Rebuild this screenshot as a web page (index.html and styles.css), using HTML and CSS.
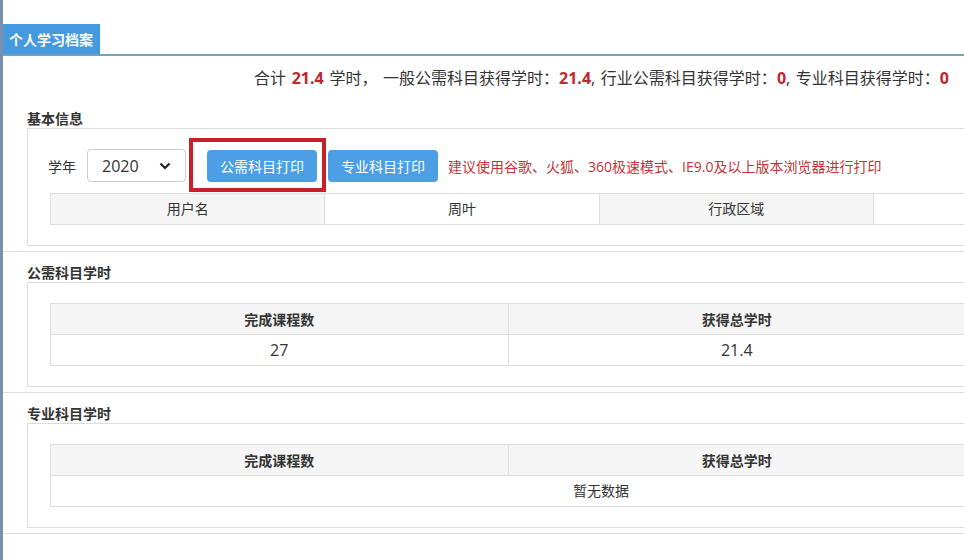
FILE: index.html
```html
<!DOCTYPE html>
<html>
<head>
    <meta charset="utf-8">
    <title>个人学习档案</title>
    <link rel="stylesheet" href="styles.css">
</head>
<body>
    <div class="page">
        <div class="tabbar">
            <span class="tab">个人学习档案</span>
        </div>

        <div class="summary">
            合计 <b>21.4</b> 学时， 一般公需科目获得学时：<b>21.4</b>, 行业公需科目获得学时：<b>0</b>, 专业科目获得学时：<b>0</b>
        </div>

        <div class="section">
            <div class="section-title">基本信息</div>
            <div class="box">
                <div class="toolbar">
                    <span class="label">学年</span>
                    <div class="select">
                        <span>2020</span>
                        <svg width="12" height="8" viewBox="0 0 12 8">
                            <polyline points="1.5,1.5 6,6 10.5,1.5" fill="none" stroke="#222" stroke-width="2.2"/>
                        </svg>
                    </div>
                    <span class="marked">
                        <button class="btn">公需科目打印</button>
                    </span>
                    <button class="btn">专业科目打印</button>
                    <span class="tip">建议使用谷歌、火狐、360极速模式、IE9.0及以上版本浏览器进行打印</span>
                </div>
                <table class="grid info">
                    <tr>
                        <td class="head">用户名</td>
                        <td>周叶</td>
                        <td class="head">行政区域</td>
                        <td></td>
                    </tr>
                </table>
            </div>
        </div>

        <div class="section">
            <div class="section-title">公需科目学时</div>
            <div class="box">
                <table class="grid">
                    <tr class="head">
                        <th>完成课程数</th>
                        <th>获得总学时</th>
                    </tr>
                    <tr>
                        <td class="num">27</td>
                        <td class="num">21.4</td>
                    </tr>
                </table>
            </div>
        </div>

        <div class="section">
            <div class="section-title">专业科目学时</div>
            <div class="box">
                <table class="grid">
                    <tr class="head">
                        <th>完成课程数</th>
                        <th>获得总学时</th>
                    </tr>
                    <tr>
                        <td colspan="2" class="empty">暂无数据</td>
                    </tr>
                </table>
            </div>
        </div>
    </div>
</body>
</html>
```

FILE: styles.css
```css
html, body {
    margin: 0;
    padding: 0;
    background: #fff;
    overflow: hidden;
}

body {
    font-family: "Open Sans", "Noto Sans CJK SC", sans-serif;
    color: #333;
    font-size: 14px;
}

.page {
    border-left: 3px solid #7d8fae;
    min-height: 560px;
    padding-top: 24px;
}

.tabbar {
    height: 30px;
    border-bottom: 2px solid #74a3b8;
}

.tab {
    display: inline-block;
    height: 30px;
    line-height: 30px;
    padding: 0 7px 0 6px;
    background: #4599df;
    color: #fff;
    font-weight: bold;
    font-size: 14px;
    font-family: "Noto Sans CJK SC", sans-serif;
}

.summary {
    margin-top: 10px;
    margin-bottom: 8px;
    height: 24px;
    line-height: 24px;
    text-align: right;
    padding-right: 15px;
    font-size: 16px;
    word-spacing: 1.5px;
}

.summary b {
    color: #c0262c;
}

.section {
    margin-right: -40px;
    padding: 10px 0 5px 24px;
    border-bottom: 1px solid #ddd;
}

.section-title {
    height: 20px;
    line-height: 20px;
    font-weight: bold;
    font-size: 14px;
    font-family: "Noto Sans CJK SC", sans-serif;
}

.box {
    border: 1px solid #ddd;
    padding: 20px 22px;
}

.toolbar {
    display: flex;
    align-items: center;
    height: 33px;
    margin-bottom: 11px;
}

.label {
    margin-left: -2px;
    margin-right: 11px;
}

.select {
    display: flex;
    align-items: center;
    justify-content: space-between;
    box-sizing: border-box;
    width: 99px;
    height: 33px;
    padding: 0 14px 0 14px;
    border: 1px solid #ccc;
    border-radius: 4px;
    font-size: 16px;
    margin-right: 21px;
}

.btn {
    height: 32px;
    padding: 0;
    width: 110px;
    border: none;
    border-radius: 4px;
    background: #4c9fe4;
    color: #fff;
    font-size: 14px;
    font-family: "Noto Sans CJK SC", sans-serif;
}

.marked {
    position: relative;
    display: inline-flex;
    margin-right: 11px;
}

.marked::after {
    content: "";
    position: absolute;
    left: -18px;
    top: -12px;
    right: -9px;
    bottom: -10px;
    border: 4px solid #c81f29;
}

.tip {
    margin-left: 10px;
    color: #c43338;
    font-size: 14px;
}

.grid {
    width: 916px;
    border-collapse: collapse;
    table-layout: fixed;
}

.grid td, .grid th {
    border: 1px solid #ddd;
    padding: 0;
    line-height: 30px;
    text-align: center;
}

.grid th, .grid .head {
    background: #f5f5f5;
}

.grid th {
    font-weight: bold;
    font-family: "Noto Sans CJK SC", sans-serif;
}

.info td {
    width: 30%;
}

.info td:last-child {
    width: 10%;
}

.num {
    font-size: 16px;
}

.empty {
    padding-left: 186px !important;
}
```
